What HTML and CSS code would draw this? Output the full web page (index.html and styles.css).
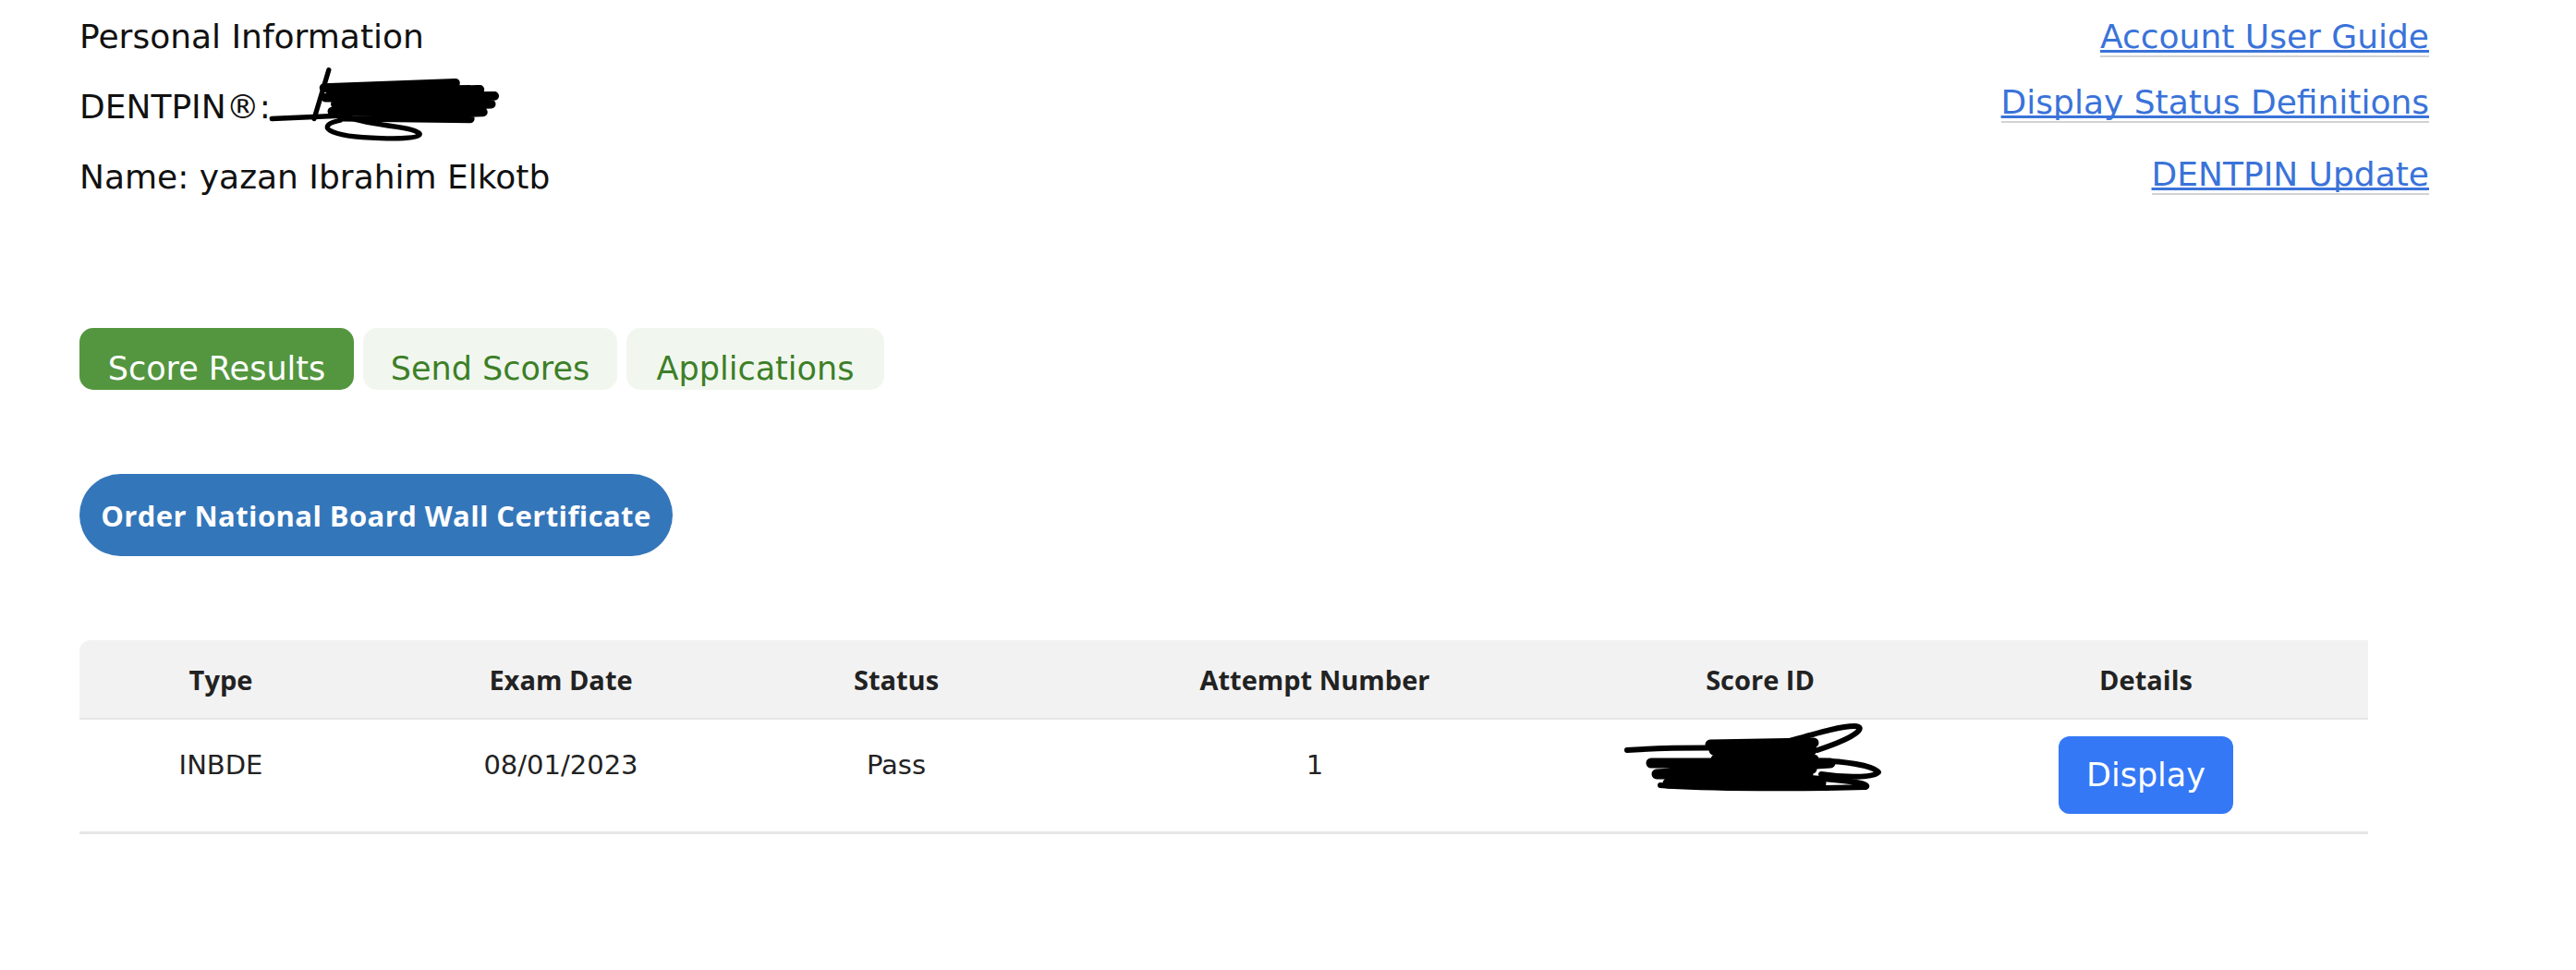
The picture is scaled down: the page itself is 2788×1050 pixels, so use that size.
FILE: index.html
```html
<!DOCTYPE html>
<html lang="en">
<head>
    <meta charset="UTF-8">
    <meta name="viewport" content="width=device-width, initial-scale=1.0">
    <title>Score Results</title>
    <link rel="stylesheet" href="styles.css">
</head>
<body>
    <div class="page">
        <div class="top">
            <div class="personal">
                <div class="line">Personal Information</div>
                <div class="line pin">DENTPIN®:
                    <svg class="scribble pin-scribble" width="255" height="84" viewBox="0 0 290 95">
                        <path d="M76 4 L58 64" />
                        <path d="M70 26 L232 20 M78 30 L262 28 L72 38 L280 36 L84 46 L276 46 L80 55 L266 56 L92 62 L250 64" class="thick" />
                        <path d="M6 64 L96 60" />
                        <path d="M90 66 C 60 72, 70 86, 140 88 C 200 90, 200 80, 160 74 C 130 70, 110 66, 100 62" />
                    </svg>
                </div>
                <div class="line">Name: yazan Ibrahim Elkotb</div>
            </div>
            <div class="links">
                <div class="link-row"><a href="#">Account User Guide</a></div>
                <div class="link-row defs"><a href="#">Display Status Definitions</a></div>
                <div class="link-row update"><a href="#">DENTPIN Update</a></div>
            </div>
        </div>

        <div class="tabs">
            <div class="tab active tab-results">Score Results</div>
            <div class="tab tab-send">Send Scores</div>
            <div class="tab tab-apps">Applications</div>
        </div>

        <button class="order">Order National Board Wall Certificate</button>

        <table class="scores">
            <thead>
                <tr>
                    <th class="c-type">Type</th>
                    <th class="c-date">Exam Date</th>
                    <th class="c-status">Status</th>
                    <th class="c-attempt">Attempt Number</th>
                    <th class="c-id">Score ID</th>
                    <th class="c-details">Details</th>
                </tr>
            </thead>
            <tbody>
                <tr>
                    <td>INBDE</td>
                    <td>08/01/2023</td>
                    <td>Pass</td>
                    <td>1</td>
                    <td class="id-cell">
                        <svg class="scribble id-scribble" width="280" height="76" viewBox="0 0 280 76">
                            <path d="M4 30 C 60 26, 120 28, 150 28 C 190 18, 230 4, 250 4 C 262 4, 258 14, 210 30" />
                            <path d="M94 24 L206 22 M30 44 L224 44 L36 56 L200 56 L48 66 L214 66" class="thick" />
                            <path d="M98 30 L204 30 L100 40 L206 40 L104 50 L204 50 L102 62 L200 62" class="thick" />
                            <path d="M40 68 C 90 72, 200 72, 262 70 C 270 66, 240 62, 170 58" />
                            <path d="M200 42 C 240 40, 272 48, 276 54 C 270 60, 240 60, 214 56" />
                        </svg>
                    </td>
                    <td class="details-cell"><button class="display">Display</button></td>
                </tr>
            </tbody>
        </table>
    </div>
</body>
</html>
```

FILE: styles.css
```css
body {
    margin: 0;
    font-family: "DejaVu Sans", "Open Sans", sans-serif;
    color: #111;
    background-color: #fff;
}

.page {
    padding: 2px 159px 0 86px;
}

.top {
    display: flex;
    justify-content: space-between;
}

.personal .line {
    font-size: 36px;
    line-height: 76px;
}

.pin {
    position: relative;
}

.scribble path {
    fill: none;
    stroke: #000;
    stroke-width: 6;
    stroke-linecap: round;
    stroke-linejoin: round;
}

.scribble path.thick {
    stroke-width: 11;
}

.pin-scribble {
    position: absolute;
    left: 203px;
    top: -6px;
}

.links {
    text-align: right;
}

.link-row {
    font-size: 36px;
    line-height: 76px;
}

.link-row a {
    color: #3a73d9;
    text-decoration: underline;
    text-decoration-thickness: 3px;
    text-underline-offset: 2px;
    text-decoration-skip-ink: none;
    border-bottom: 2px solid #d2d2d2;
}

.link-row.defs {
    margin-top: -5px;
}

.link-row.update {
    margin-top: 2px;
}

.tabs {
    display: flex;
    gap: 10px;
    margin-top: 125px;
}

.tab {
    height: 67px;
    box-sizing: border-box;
    padding-top: 24px;
    font-size: 35px;
    line-height: 40px;
    text-align: center;
    border-radius: 15px;
    background-color: #f1f7ef;
    color: #3d7f27;
}

.tab.active {
    background-color: #54963f;
    color: #fff;
}

.tab-results {
    width: 297px;
}

.tab-send {
    width: 275px;
}

.tab-apps {
    width: 279px;
}

.order {
    display: block;
    margin-top: 91px;
    width: 642px;
    height: 89px;
    border: none;
    border-radius: 45px;
    background-color: #3476ba;
    color: #fff;
    font-family: "Open Sans", "Liberation Sans", sans-serif;
    font-weight: 700;
    font-size: 31px;
    letter-spacing: 0.4px;
    padding: 0;
}

.scores {
    margin-top: 91px;
    width: 2477px;
    border-collapse: collapse;
    table-layout: fixed;
}

.scores th {
    height: 84px;
    padding: 0;
    background-color: #f2f2f2;
    border-bottom: 2px solid #e6e6e6;
    font-family: "Open Sans", "Liberation Sans", sans-serif;
    font-size: 29px;
    font-weight: 700;
    color: #222;
}

.scores th.c-type {
    border-top-left-radius: 12px;
}

.c-type { width: 306px; }
.c-date { width: 430px; }
.c-status { width: 296px; }
.c-attempt { width: 610px; }
.c-id { width: 354px; }
.c-details { width: 481px; }

.scores tbody tr {
    height: 123px;
}

.scores td {
    padding: 0 0 23px;
    text-align: center;
    vertical-align: middle;
    font-size: 29px;
    color: #222;
    border-bottom: 3px solid #e6e6e6;
}

.scores td.id-cell,
.scores td.details-cell {
    padding: 0;
}

.id-scribble {
    display: block;
    margin: 0 auto;
    position: relative;
    left: -8px;
    top: -19px;
}

.display {
    width: 189px;
    height: 84px;
    border: none;
    border-radius: 12px;
    background-color: #3478f6;
    color: #fff;
    font-family: "DejaVu Sans", "Open Sans", sans-serif;
    font-size: 35px;
    padding: 0;
}
```
